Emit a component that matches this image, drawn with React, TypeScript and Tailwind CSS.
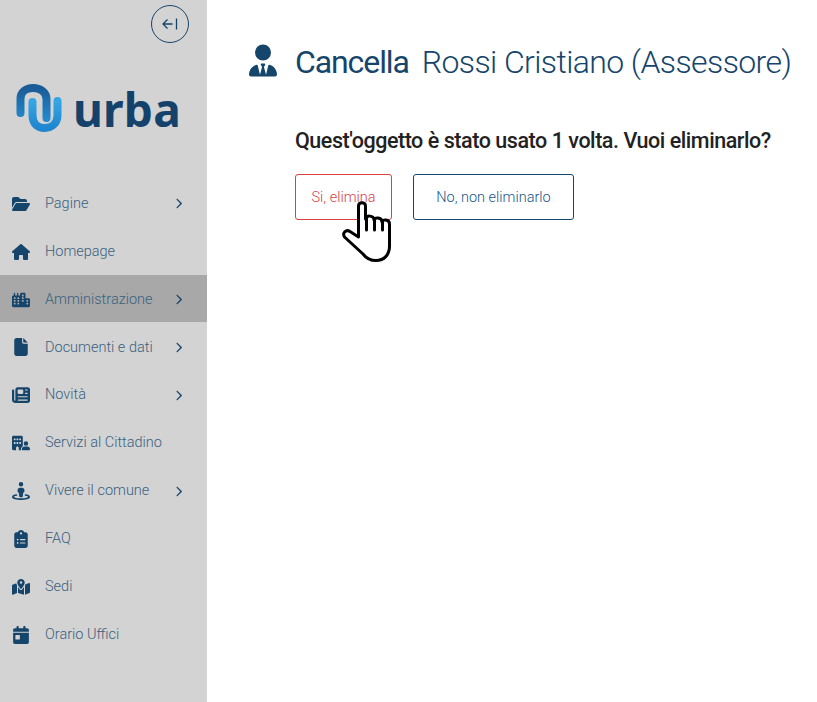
import React from "react";
import {
  FaFolderOpen, FaHouse, FaCity, FaFile, FaNewspaper, FaStreetView, FaClipboardList, FaMapLocationDot, FaChevronRight, FaUserTie, FaBuildingUser, FaCalendarDay,
} from "react-icons/fa6";

const items = [
  { label: "Pagine", Icon: FaFolderOpen, chev: true },
  { label: "Homepage", Icon: FaHouse },
  { label: "Amministrazione", Icon: FaCity, chev: true, active: true },
  { label: "Documenti e dati", Icon: FaFile, chev: true },
  { label: "Novità", Icon: FaNewspaper, chev: true },
  { label: "Servizi al Cittadino", Icon: FaBuildingUser },
  { label: "Vivere il comune", Icon: FaStreetView, chev: true },
  { label: "FAQ", Icon: FaClipboardList },
  { label: "Sedi", Icon: FaMapLocationDot },
  { label: "Orario Uffici", Icon: FaCalendarDay },
];

function Logo() {
  return (
    <div className="flex items-center h-[60px] pl-[15px]">
      <svg width="48" height="50" viewBox="16 83 48 50" className="shrink-0">
        <defs>
          <linearGradient id="d" x1="0" y1="0" x2="0" y2="1">
            <stop offset="0" stopColor="#1a5c96" />
            <stop offset="1" stopColor="#2388cc" />
          </linearGradient>
          <linearGradient id="l" x1="0" y1="0" x2="0" y2="1">
            <stop offset="0" stopColor="#35a6e4" />
            <stop offset="1" stopColor="#1f86d0" />
          </linearGradient>
        </defs>
        <path d="M21.5 113V99C21.5 92 27 88 34 88C41 88 47.5 92 47.5 99V118" fill="none" stroke="url(#d)" strokeWidth="8" strokeLinecap="round" />
        <path d="M33.5 102V115C33.5 123 38 128 45.5 128C53 128 58.5 123 58.5 115V101" fill="none" stroke="url(#l)" strokeWidth="8" strokeLinecap="round" />
      </svg>
      <span className="ml-[10px] mt-[2px] text-[46px] leading-none font-bold text-[#15426a] tracking-[0.2px] font-['Noto_Sans',sans-serif]">urba</span>
    </div>
  );
}

export default function App() {
  return (
    <div className="relative flex min-h-[702px] bg-white font-['Roboto',sans-serif]">
      <aside className="w-[207px] shrink-0 bg-[#d3d3d3]">
        <div className="flex justify-end pt-[5px] pr-[18px]">
          <button className="flex h-[38px] w-[38px] items-center justify-center rounded-full border border-[#16456b]">
            <svg width="16" height="14" viewBox="0 0 16 14" fill="none" stroke="#16456b" strokeWidth="1.3">
              <path d="M1 7H10.5M5.5 2.5L1 7L5.5 11.5M14.5 1.5V12.5" />
            </svg>
          </button>
        </div>
        <div className="mt-[35px]"><Logo /></div>
        <nav className="mt-[40.8px]">
          {items.map(({ label, Icon, chev, active }) => (
            <div key={label} className={`flex h-[47.9px] items-center pl-[12px] pt-[2px] ${active ? "bg-[#a8a8a8]" : ""}`}>
              <span className="flex w-[18px] justify-center text-[#16456b]"><Icon size={18} /></span>
              <span className="ml-[15px] w-[125px] whitespace-nowrap text-[14.5px] font-light text-[#3a617f]">{label}</span>
              {chev && <FaChevronRight size={11} className="ml-[3px] text-[#16456b]" />}
            </div>
          ))}
        </nav>
      </aside>
      <main className="flex-1 pl-[42px] pt-[39px]">
        <div className="flex items-center h-[44px]">
          <FaUserTie size={33} className="text-[#16456b] w-[28px] -mt-[2px]" />
          <h1 className="ml-[18px] pt-[2px] whitespace-nowrap text-[32px] font-[450] leading-none text-[#16456b] tracking-[-1.1px]">Cancella</h1>
          <span className="ml-[13px] pt-[2px] whitespace-nowrap text-[32px] font-light leading-none text-[#16456b] tracking-[-0.6px]">Rossi Cristiano (Assessore)</span>
        </div>
        <div className="pl-[46px]">
          <p className="mt-[43px] whitespace-nowrap text-[21.5px] font-medium leading-[30px] text-[#222] tracking-[-0.45px]">Quest'oggetto è stato usato 1 volta. Vuoi eliminarlo?</p>
          <div className="mt-[18px] flex gap-[21px]">
            <button className="h-[46px] w-[97px] rounded-[3px] border border-[#d9403f] pt-[2px] text-[14.5px] font-light text-[#d9404f]">Si, elimina</button>
            <button className="h-[46px] w-[161px] rounded-[3px] border border-[#16456b] pt-[2px] text-[14.5px] font-light text-[#16578a]">No, non eliminarlo</button>
          </div>
        </div>
      </main>
      <svg className="absolute left-[342px] top-[200px]" width="50" height="63" viewBox="0 0 50 63" fill="white" stroke="black" strokeWidth="3" strokeLinejoin="round" strokeLinecap="round">
        <path d="M16.5 37V6C16.5 1.5 23.5 1.5 23.5 6V19C23.5 15 32 15 32 20C32 17 40 17 40 22C40 19 47.5 19 47.5 24V46C47.5 55 42 60.5 34 60.5C28 60.5 24 58 21 54L2.5 37C0 33 4 29 8 31.5Z" />
        <path d="M24.5 17V30M32.5 20V30M40.5 22V30" fill="none" />
      </svg>
    </div>
  );
}
